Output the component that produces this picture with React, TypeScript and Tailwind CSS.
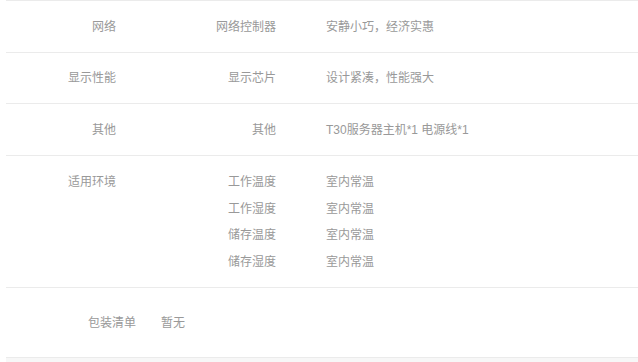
const specs = [
  { group: '网络', name: '网络控制器', value: '安静小巧，经济实惠', h: 'h-[52px]' },
  { group: '显示性能', name: '显示芯片', value: '设计紧凑，性能强大', h: 'h-[51px]' },
  { group: '其他', name: '其他', value: 'T30服务器主机*1 电源线*1', h: 'h-[52px]' },
]

const env = [
  { name: '工作温度', value: '室内常温' },
  { name: '工作湿度', value: '室内常温' },
  { name: '储存温度', value: '室内常温' },
  { name: '储存湿度', value: '室内常温' },
]

export default function App() {
  return (
    <div
      className="w-[638px] h-[362px] overflow-hidden bg-white pl-[6px] text-[12px] text-[#999999]"
      style={{ fontFamily: '"Liberation Sans", "Noto Sans CJK SC", sans-serif' }}
    >
      <div className="flex flex-col">
        {specs.map((row) => (
          <div key={row.group + row.name} className={`flex items-center border-t border-[#ebebeb] ${row.h}`}>
            <div className="w-[110px] text-right">{row.group}</div>
            <div className="w-[160px] text-right">{row.name}</div>
            <div className="ml-[50px]">{row.value}</div>
          </div>
        ))}

        {/* 适用环境 */}
        <div className="flex border-t border-[#ebebeb] h-[132px] pt-[13px]">
          <div className="w-[110px] text-right leading-[26.5px]">适用环境</div>
          <div className="flex flex-col">
            {env.map((e) => (
              <div key={e.name} className="flex h-[26.5px] items-center">
                <div className="w-[160px] text-right">{e.name}</div>
                <div className="ml-[50px]">{e.value}</div>
              </div>
            ))}
          </div>
        </div>

        {/* 包装清单 */}
        <div className="flex items-center border-t border-[#ebebeb] h-[70px]">
          <div className="ml-[82px]">包装清单</div>
          <div className="ml-[25px]">暂无</div>
        </div>

        <div className="h-[10px] border-t border-[#ebebeb] bg-[#f7f7f7]" />
      </div>
    </div>
  )
}
